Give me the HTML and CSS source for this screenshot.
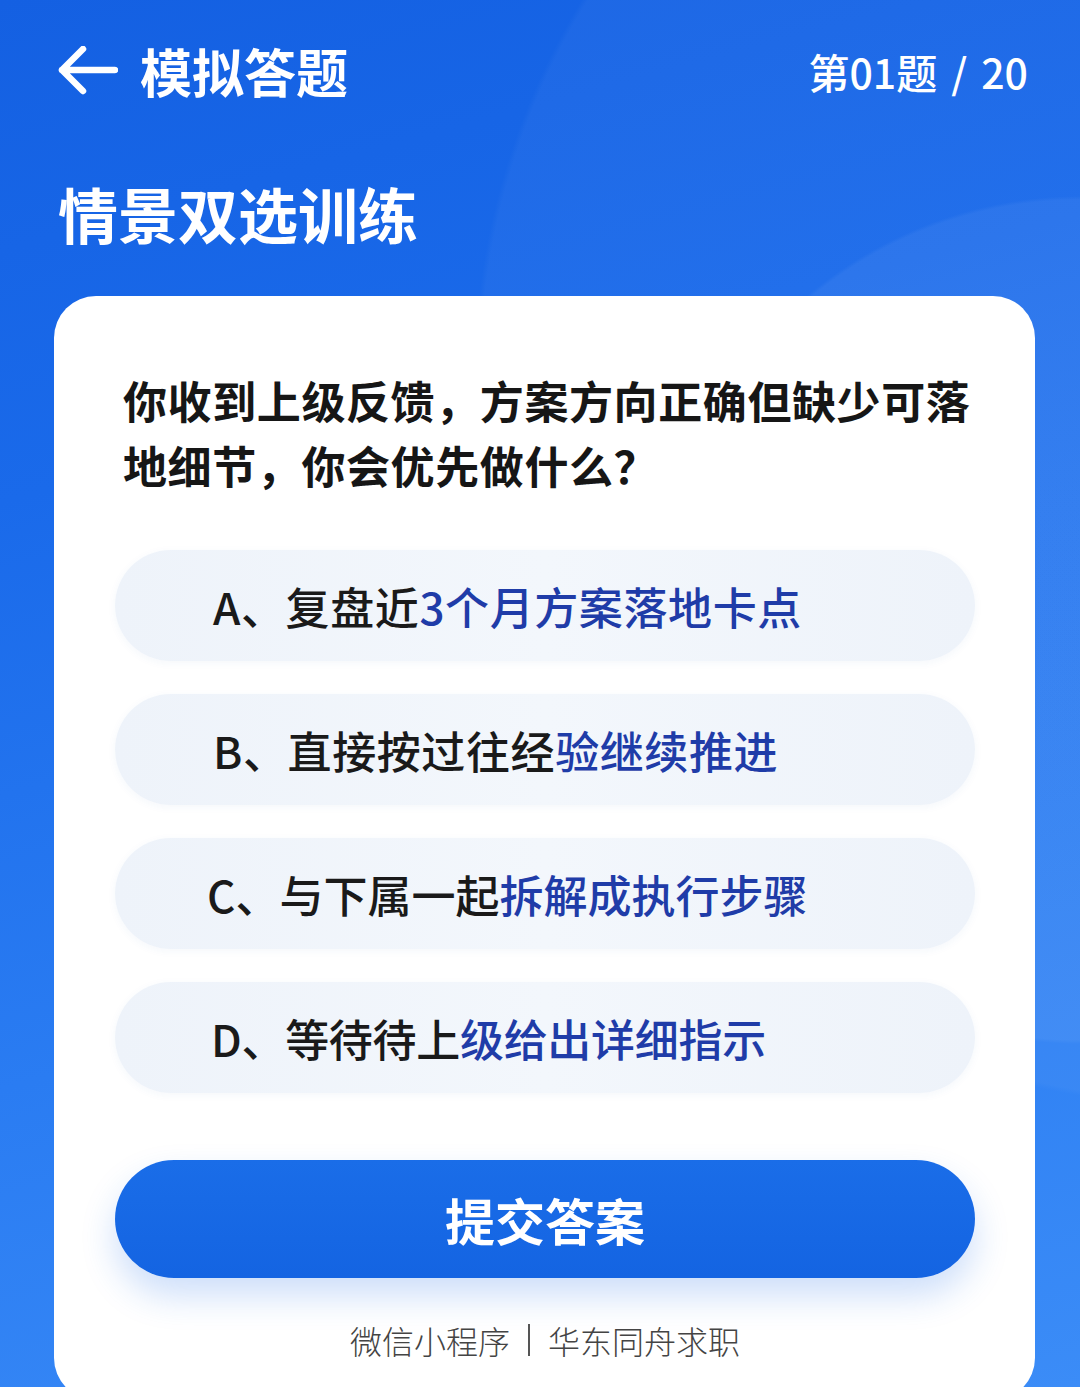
FILE: index.html
```html
<!DOCTYPE html>
<html lang="zh-CN">
<head>
<meta charset="utf-8">
<title>模拟答题</title>
<link rel="stylesheet" href="styles.css">
</head>
<body>
<div class="page">
  <header class="topbar">
    <div class="topbar-left">
      <svg class="back-icon" viewBox="0 0 60 50" width="60" height="50" aria-hidden="true">
        <path d="M25 3 L4 24 L25 45 M4 24 L57 24" fill="none" stroke="#ffffff" stroke-width="6.5" stroke-linecap="round" stroke-linejoin="round"/>
      </svg>
      <span class="topbar-title">模拟答题</span>
    </div>
    <div class="progress">第01题<span class="slash">/</span>20</div>
  </header>

  <h1 class="section-title">情景双选训练</h1>

  <main class="card">
    <p class="question">你收到上级反馈，方案方向正确但缺少可落地细节，你会优先做什么？</p>

    <ul class="options">
      <li class="option">A、复盘近<span class="hl">3个月方案落地卡点</span></li>
      <li class="option">B、直接按过往经<span class="hl">验继续推进</span></li>
      <li class="option opt-c">C、与下属一起<span class="hl">拆解成执行步骤</span></li>
      <li class="option opt-d">D、等待待上<span class="hl">级给出详细指示</span></li>
    </ul>

    <button class="submit" type="button">提交答案</button>

    <footer class="footer">微信小程序<span class="sep"></span>华东同舟求职</footer>
  </main>
</div>
</body>
</html>
```

FILE: styles.css
```css
* {
  box-sizing: border-box;
}

html, body {
  margin: 0;
  padding: 0;
}

body {
  width: 1080px;
  height: 1387px;
  overflow: hidden;
  font-family: "Noto Sans CJK SC", "Noto Sans", sans-serif;
  background:
    radial-gradient(circle at 1080px 620px, rgba(255,255,255,0.05) 0, rgba(255,255,255,0.05) 420px, rgba(255,255,255,0) 424px),
    radial-gradient(circle at 1200px 380px, rgba(255,255,255,0.035) 0, rgba(255,255,255,0.035) 720px, rgba(255,255,255,0) 726px),
    linear-gradient(165deg, #1460e2 0%, #1a6aea 30%, #2a7cf2 65%, #3b8cf7 100%);
}

.page {
  display: flex;
  flex-direction: column;
}

.topbar {
  display: flex;
  justify-content: space-between;
  align-items: center;
  height: 52px;
  margin-top: 45px;
  padding: 0 52px 0 58px;
  color: #ffffff;
}

.topbar-left {
  display: flex;
  align-items: center;
  gap: 22px;
}

.back-icon {
  display: block;
}

.topbar-title {
  font-size: 52px;
  font-weight: 700;
  line-height: 52px;
}

.progress {
  font-size: 41px;
  font-weight: 500;
  line-height: 52px;
  white-space: nowrap;
}

.slash {
  margin: 0 14px;
}

.section-title {
  margin: 81px 0 0 58px;
  font-size: 60px;
  font-weight: 700;
  line-height: 70px;
  color: #ffffff;
}

.card {
  margin: 48px 45px 0 54px;
  background: #ffffff;
  border-radius: 42px;
  padding: 72px 60px 40px 61px;
  display: flex;
  flex-direction: column;
}

.question {
  margin: 0 -4px 0 0;
  padding-left: 8px;
  font-size: 44px;
  font-weight: 700;
  line-height: 65px;
  letter-spacing: 0.6px;
  color: #161616;
}

.options {
  list-style: none;
  margin: 52px 0 0;
  padding: 0;
  display: flex;
  flex-direction: column;
  gap: 33px;
}

.option {
  height: 111px;
  display: flex;
  align-items: center;
  padding-left: 98px;
  border-radius: 56px;
  background: linear-gradient(90deg, #eef3fa 0%, #f3f7fc 50%, #eef3fa 100%);
  box-shadow: 0 2px 8px rgba(40, 90, 170, 0.05);
  font-size: 44px;
  font-weight: 500;
  letter-spacing: 0.6px;
  color: #1a1a1a;
  white-space: nowrap;
}

.opt-c {
  padding-left: 92px;
  letter-spacing: 0;
}

.opt-d {
  padding-left: 96px;
  letter-spacing: -0.3px;
}

.hl {
  color: #1f3ca8;
}

.submit {
  margin-top: 67px;
  height: 118px;
  border: none;
  border-radius: 59px;
  background: linear-gradient(180deg, #1a6de8 0%, #1464e2 100%);
  box-shadow: 0 18px 34px rgba(30, 110, 230, 0.22);
  color: #ffffff;
  font-family: "Noto Sans CJK SC", "Noto Sans", sans-serif;
  font-size: 50px;
  font-weight: 700;
  padding: 0;
}

.footer {
  margin-top: 42px;
  display: flex;
  justify-content: center;
  align-items: center;
  font-size: 32px;
  line-height: 40px;
  font-weight: 300;
  color: #444444;
}

.sep {
  display: inline-block;
  width: 0;
  height: 32px;
  border-left: 2px solid #555555;
  margin: 0 18px;
}
```
